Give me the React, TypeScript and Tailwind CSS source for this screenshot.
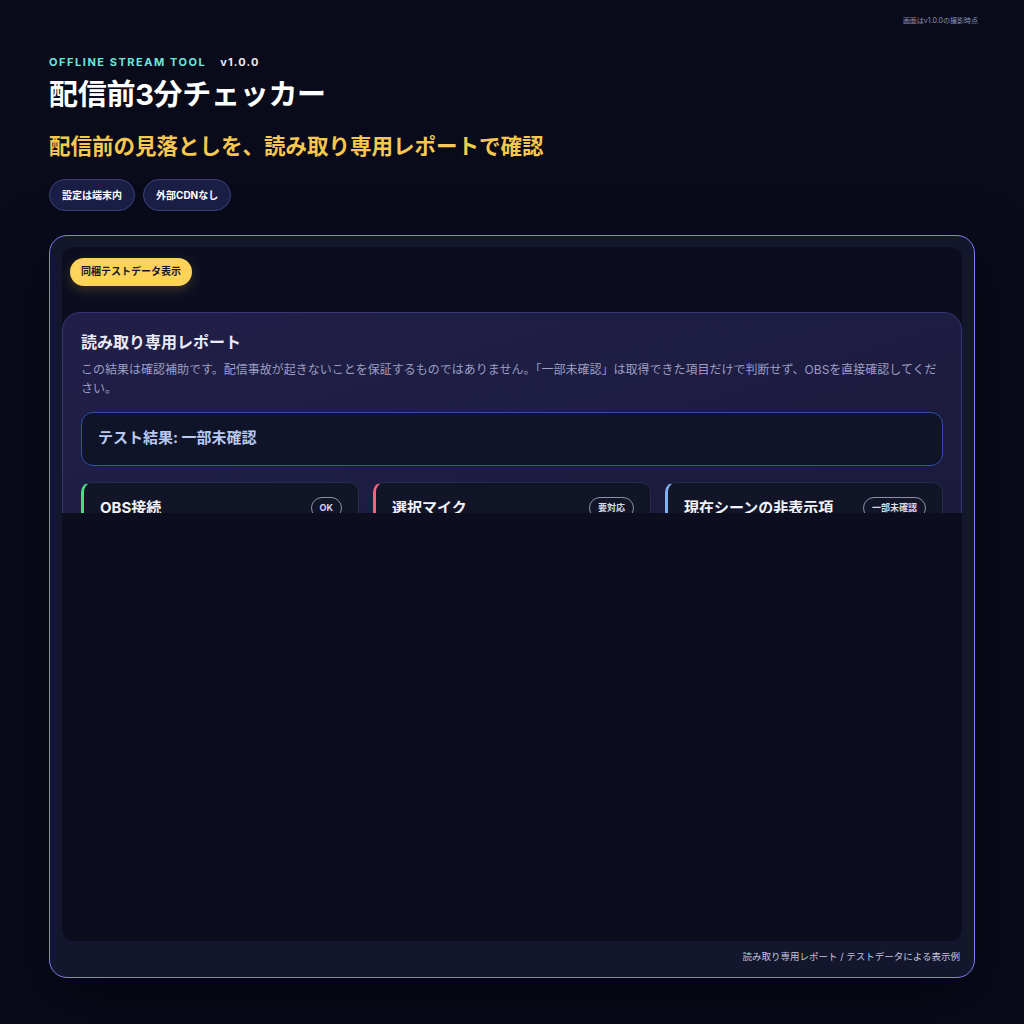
import React from 'react';

const checks = [
  { title: 'OBS接続', badge: 'OK', accent: 'border-l-[#4ade80]' },
  { title: '選択マイク', badge: '要対応', accent: 'border-l-[#f0657a]' },
  { title: '現在シーンの非表示項', badge: '一部未確認', accent: 'border-l-[#7fb0f0]' },
];

export default function App() {
  return (
    <div className="min-h-screen w-full bg-[#090b1b] font-['Inter','Noto_Sans_CJK_JP',sans-serif] text-white">
      <div className="flex justify-end pr-[46px] pt-[15px]">
        <span className="text-[7px] leading-[12px] text-[#8d92b4]">画面はv1.0.0の撮影時点</span>
      </div>

      <div className="px-[49px]">
        <div className="mt-[28px] flex items-center gap-[14px] text-[11px] font-bold leading-[14px]">
          <span className="tracking-[0.14em] text-[#6fe3dc]">OFFLINE STREAM TOOL</span>
          <span className="tracking-[0.1em] text-[#e8eaf6]">v1.0.0</span>
        </div>
        <h1 className="mt-[6px] text-[29px] font-bold leading-[40px] tracking-[-0.01em] text-white">
          配信前3分チェッカー
        </h1>
        <p className="mt-[16px] text-[21.5px] font-bold leading-[30px] text-[#f6c850]">
          配信前の見落としを、読み取り専用レポートで確認
        </p>
        <div className="mt-[18px] flex gap-[8px]">
          <span className="flex h-[32px] items-center rounded-full border border-[#3a3f7c] bg-[#1b1e44] px-[12px] text-[10px] font-bold">
            設定は端末内
          </span>
          <span className="flex h-[32px] items-center rounded-full border border-[#3a3f7c] bg-[#1b1e44] px-[12px] text-[10px] font-bold">
            外部CDNなし
          </span>
        </div>

        <div className="mt-[24px] w-[926px] rounded-[18px] border-[1.5px] border-[#7d80ee] bg-[#14162e] px-[12px] pt-[11px] pb-[12px] shadow-[0_20px_60px_rgba(0,0,0,0.55)]">
          <div className="h-[694px] rounded-[12px] bg-[#0c0e20]">
            <div className="h-[266px] overflow-hidden rounded-t-[12px]">
              <div className="px-[8px] pt-[10px]">
                <span className="inline-flex h-[28px] items-center rounded-full bg-[#fdd35a] px-[11px] text-[10px] font-bold text-[#1a1a24] shadow-[0_4px_12px_rgba(253,211,90,0.18)]">
                  同梱テストデータ表示
                </span>
              </div>
              <div className="mt-[26px] rounded-[18px] border border-[#35357a] bg-gradient-to-br from-[#211f48] to-[#1a1a3a] px-[18px] pt-[17px] pb-[20px]">
                <h2 className="text-[16px] font-bold leading-[24px] text-[#ebebf7]">読み取り専用レポート</h2>
                <p className="mt-[6px] text-[12px] leading-[19px] text-[#9c9ec2]">
                  この結果は確認補助です。配信事故が起きないことを保証するものではありません。「一部未確認」は取得できた項目だけで判断せず、OBSを直接確認してください。
                </p>
                <div className="mt-[14px] flex h-[54px] items-center rounded-[12px] border border-[#2f4fa8] bg-[#0f1429] px-[16px] text-[15px] font-bold text-[#b9c9f2]">
                  テスト結果: 一部未確認
                </div>
                <div className="mt-[16px] grid grid-cols-3 gap-[14px]">
                  {checks.map((c) => (
                    <div
                      key={c.title}
                      className={`h-[90px] rounded-[10px] border border-l-[3px] border-[#272b45] bg-[#111527] ${c.accent} px-[16px] pt-[13px]`}
                    >
                      <div className="flex items-center justify-between">
                        <span className="text-[15px] font-bold leading-[24px] text-[#f2f3fa]">{c.title}</span>
                        <span className="flex h-[22px] items-center rounded-full border border-[#8e91a8] px-[8px] text-[9px] font-bold text-[#d7d9e6]">
                          {c.badge}
                        </span>
                      </div>
                    </div>
                  ))}
                </div>
              </div>
            </div>
          </div>
          <div className="mt-[8px] pr-[2px] text-right text-[9.5px] leading-[16px] text-[#c2c5dc]">
            読み取り専用レポート / テストデータによる表示例
          </div>
        </div>
      </div>
    </div>
  );
}
